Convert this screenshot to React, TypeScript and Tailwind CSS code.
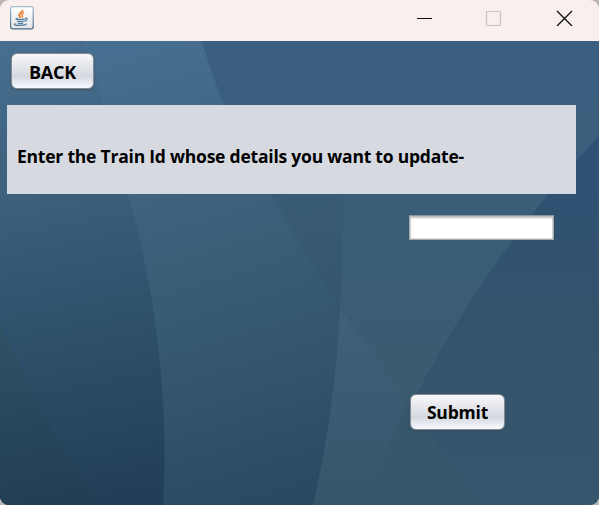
import type { ReactNode } from "react";

function JavaIcon() {
  return (
    <svg className="block size-6" viewBox="0 0 24 24" fill="none">
      <defs>
        <linearGradient id="tile" x1="0" y1="0" x2="0" y2="1">
          <stop offset="0" stopColor="#fff" />
          <stop offset="1" stopColor="#e3e5e8" />
        </linearGradient>
        <linearGradient id="tileEdge" x1="0" y1="0" x2="0" y2="1">
          <stop offset="0" stopColor="#a4bdcf" />
          <stop offset="1" stopColor="#456984" />
        </linearGradient>
      </defs>
      <rect x=".6" y=".6" width="22.6" height="22.2" rx="2" fill="url(#tile)" stroke="url(#tileEdge)" strokeWidth="1.200" />
      <path d="M12.600 4c.5 2.200-3.600 3-3.500 5 0 1 .8 1.600 1.500 2.600" stroke="#ee8130" strokeWidth="2" />
      <path d="M14.200 6.800c-2.400.9-2.900 1.900-2 2.800.6.8.4 1.500-.3 2.100" stroke="#f18c40" strokeWidth="1.500" />
      <path d="M7.500 12.200c-3 .9-.8 1.400 2.800 1.300 2 0 3.700-.2 4.400-.8M15 12.300c2.700-.6 2.600 2.300-.6 2.900M6.900 15c1.500 1 5.800.9 7.100 0M7.700 17c1.600.7 4.200.6 5.500 0M5.500 17.500c-2.500 1-.5 1.900 4.500 1.900 4.300 0 6.800-.6 6-1.700" stroke="#527b9c" strokeWidth="1.300" />
    </svg>
  );
}

function TitleBar() {
  return (
    <header className="flex h-[41px] items-start bg-[#f9f0ed] pl-[10px] pt-[6px]">
      <JavaIcon />
      <svg className="ml-auto mr-[26px] mt-[4px] h-4 w-[156px]" viewBox="0 0 156 16" fill="none">
        <path d="M0 8.500h15" stroke="#111" />
        <rect x="69.500" y="1.500" width="14" height="14" rx="1" stroke="#c9c2c0" strokeWidth="1.200" />
        <path d="M140 1l15 15M155 1l-15 15" stroke="#111" strokeWidth="1.400" />
      </svg>
    </header>
  );
}

function Backdrop() {
  return (
    <svg className="col-start-1 row-start-1 block h-[464px] w-[599px]" viewBox="0 41 599 464">
      <defs>
        <linearGradient id="base" gradientUnits="userSpaceOnUse" x1="0" y1="41" x2="0" y2="400">
          <stop offset="0" stopColor="#3a5f80" />
          <stop offset=".5" stopColor="#3a5d77" />
          <stop offset="1" stopColor="#395c70" />
        </linearGradient>
        <linearGradient id="wedge" gradientUnits="userSpaceOnUse" x1="0" y1="309" x2="0" y2="505">
          <stop offset="0" stopColor="#3e6079" />
          <stop offset="1" stopColor="#36566b" />
        </linearGradient>
        <linearGradient id="right" gradientUnits="userSpaceOnUse" x1="0" y1="140" x2="0" y2="505">
          <stop offset="0" stopColor="#2f5174" />
          <stop offset=".55" stopColor="#32546d" />
          <stop offset="1" stopColor="#35566c" />
        </linearGradient>
        <linearGradient id="middle" gradientUnits="userSpaceOnUse" x1="100" y1="50" x2="245" y2="530">
          <stop offset="0" stopColor="#476f91" />
          <stop offset=".34" stopColor="#3e627e" />
          <stop offset=".52" stopColor="#395c75" />
          <stop offset=".74" stopColor="#31536b" />
          <stop offset="1" stopColor="#294760" />
        </linearGradient>
        <linearGradient id="shade" gradientUnits="userSpaceOnUse" x1="0" y1="160" x2="60" y2="460">
          <stop offset="0" stopColor="#3a5d79" />
          <stop offset=".4" stopColor="#385a74" />
          <stop offset="1" stopColor="#2e4f67" />
        </linearGradient>
        <linearGradient id="left" gradientUnits="userSpaceOnUse" x1="0" y1="50" x2="90" y2="505">
          <stop offset="0" stopColor="#476e8f" />
          <stop offset=".32" stopColor="#3c607d" />
          <stop offset=".57" stopColor="#30536e" />
          <stop offset="1" stopColor="#223e56" />
        </linearGradient>
        <linearGradient id="corner" gradientUnits="userSpaceOnUse" x1="0" y1="323" x2="40" y2="505">
          <stop offset="0" stopColor="#305265" />
          <stop offset="1" stopColor="#223e53" />
        </linearGradient>
      </defs>
      <path d="M0 41H599V505H0Z" fill="url(#base)" />
      <path d="M599 136C505 236 410 380 370 505H599Z" fill="url(#right)" />
      <path d="M340 309C365 343 392 380 407 403C390 438 379 475 370 505H313Q335 410 340 309Z" fill="url(#wedge)" />
      <path d="M407 403L478 505H370C379 475 390 438 407 403Z" fill="#36576c" />
      <path d="M0 41H202Q218 95 235 130L271 194Q305 257 340 309Q335 410 313 505H0Z" fill="url(#middle)" />
      <path d="M202 41Q215 90 271 194Q305 257 340 309Q344 235 343 194L341 105L340 41Z" fill="url(#base)" />
      <path d="M225 105L271 194Q305 257 340 309Q344 235 342 105Z" fill="url(#shade)" />
      <path d="M0 41H84Q108 115 128 194Q172 350 163 505H0Z" fill="url(#left)" />
      <path d="M0 323Q42 422 98 505H0Z" fill="url(#corner)" />
    </svg>
  );
}

function GlossyButton({ children, size }: { children: ReactNode; size: string }) {
  return (
    <button
      className={`${size} block h-9 rounded-[6px] border border-[#858a92] bg-linear-to-b from-[#f7f8fa] via-[#d5d8df] via-65% to-[#f7faff] text-center leading-none font-bold text-black shadow-[0_0_1px_#70767e,0_1px_2px_#343d4880]`}
    >
      {children}
    </button>
  );
}

export default function App() {
  return (
    <div className="h-[505px] w-[599px] bg-[#b9b6b5]">
      <main className="h-full overflow-hidden rounded-[9px] font-['Open_Sans','Noto_Sans',sans-serif]">
        <TitleBar />
        <div className="grid h-[464px] grid-cols-1 grid-rows-1">
          <Backdrop />
          <section className="z-10 col-start-1 row-start-1 flex flex-col items-start pt-[12px]">
            <div className="ml-[11px]">
              <GlossyButton size="w-[83px] pt-[2px] text-[18px] tracking-[-0.2px]">BACK</GlossyButton>
            </div>
            <label
              htmlFor="train-id"
              className="mt-4 ml-[7px] flex h-[89px] w-[569px] items-center bg-[#d6d9e0] pt-[12px] pl-[10px] text-[17.5px] leading-6 font-bold tracking-[-0.22px] whitespace-nowrap text-black"
            >
              Enter the Train Id whose details you want to update-
            </label>
            <input
              id="train-id"
              className="mt-[21px] ml-[409px] h-[25px] w-[145px] border border-[#a5a9ad] border-t-[#919397] bg-white px-2 shadow-[inset_0_2px_2px_#bbb,inset_0_0_0_1px_#ddd] outline-none"
            />
            <div className="mt-[154px] ml-[410px]">
              <GlossyButton size="w-[95px] pt-[1px] text-[17.5px] tracking-[-0.2px]">Submit</GlossyButton>
            </div>
          </section>
        </div>
      </main>
    </div>
  );
}
